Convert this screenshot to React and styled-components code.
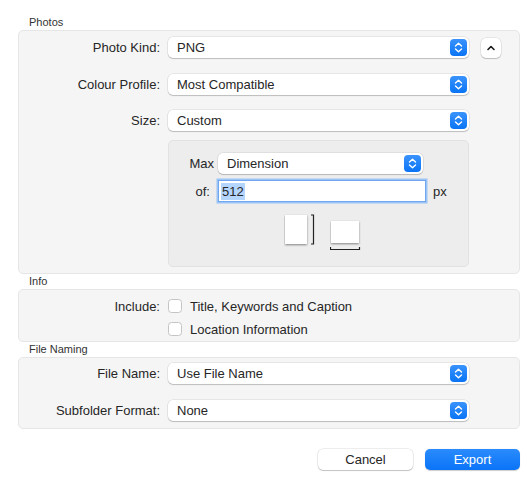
import React from 'react'
import styled, { createGlobalStyle } from 'styled-components'

const GlobalStyle = createGlobalStyle`
  html, body {
    margin: 0;
    padding: 0;
    background: #ffffff;
  }
  body {
    font-family: "Liberation Sans", Arial, sans-serif;
    font-size: 13px;
    color: #262626;
  }
`

const Page = styled.div`
  width: 532px;
  height: 479px;
  box-sizing: border-box;
  padding: 15px 12px 0 18px;
  display: flex;
  flex-direction: column;
`

const SectionTitle = styled.div`
  height: 15px;
  line-height: 14px;
  font-size: 11px;
  color: #333;
  padding-left: 11px;
`

const Panel = styled.div`
  box-sizing: border-box;
  background: #f5f5f5;
  border: 1px solid #e6e6e6;
  border-radius: 5px;
  padding: ${p => p.$pad};
  display: flex;
  flex-direction: column;
  gap: ${p => p.$gap}px;
`

const Row = styled.div`
  display: flex;
  align-items: center;
  height: ${p => p.$h || 21}px;
  margin-top: ${p => p.$mt || 0}px;
`

const Label = styled.div`
  width: 141px;
  text-align: right;
  flex-shrink: 0;
  margin-right: 8px;
  white-space: nowrap;
`

const PopupBox = styled.div`
  box-sizing: border-box;
  width: ${p => p.$w}px;
  height: ${p => p.$h || 21}px;
  background: #fff;
  border-radius: 5px;
  box-shadow: 0 0 0 0.5px rgba(0, 0, 0, 0.12), 0 1px 1px rgba(0, 0, 0, 0.18);
  display: flex;
  align-items: center;
  justify-content: space-between;
  padding: 0 2px 0 9px;
`

const StepperWrap = styled.span`
  display: flex;
  width: 17px;
  height: 17px;
`

function Stepper() {
  return (
    <StepperWrap>
      <svg width="17" height="17" viewBox="0 0 17 17">
        <defs>
          <linearGradient id="stp" x1="0" y1="0" x2="0" y2="1">
            <stop offset="0" stopColor="#3a93fc" />
            <stop offset="1" stopColor="#0a74f5" />
          </linearGradient>
        </defs>
        <rect x="0" y="0" width="17" height="17" rx="4" fill="url(#stp)" />
        <path d="M5.5 7 L8.5 4.3 L11.5 7" fill="none" stroke="#fff" strokeWidth="1.4" strokeLinecap="round" strokeLinejoin="round" />
        <path d="M5.5 10 L8.5 12.7 L11.5 10" fill="none" stroke="#fff" strokeWidth="1.4" strokeLinecap="round" strokeLinejoin="round" />
      </svg>
    </StepperWrap>
  )
}

function Popup({ value, width }) {
  return (
    <PopupBox $w={width}>
      <span>{value}</span>
      <Stepper />
    </PopupBox>
  )
}

const SmallButton = styled.div`
  width: 20px;
  height: 20px;
  margin-left: 12px;
  background: #fff;
  border-radius: 5px;
  box-shadow: 0 0 0 0.5px rgba(0, 0, 0, 0.12), 0 1px 1px rgba(0, 0, 0, 0.18);
  display: flex;
  align-items: center;
  justify-content: center;
`

const SubPanel = styled.div`
  box-sizing: border-box;
  width: 301px;
  height: 127px;
  margin: 9px 0 0 149px;
  background: #ededed;
  border: 1px solid #e2e2e2;
  border-radius: 5px;
  padding: 12px 0 0 0;
  display: flex;
  flex-direction: column;
`

const SubLabel = styled.div`
  width: 45px;
  text-align: right;
  padding-right: ${p => p.$pr || 0}px;
  box-sizing: border-box;
  margin-right: 4px;
  flex-shrink: 0;
`

const SizeInput = styled.div`
  box-sizing: border-box;
  width: 206px;
  height: 20px;
  margin-left: 1px;
  background: #fff;
  box-shadow: 0 0 0 1px #6fa8f0, 0 0 0 2.5px #9cc4f6;
  display: flex;
  align-items: center;
  padding-left: 2px;
`

const Selected = styled.span`
  background: #b4d5fe;
  padding: 1px 1px;
`

const Unit = styled.span`
  margin-left: 8px;
`

const Orientation = styled.div`
  display: flex;
  align-items: flex-start;
  margin: 13px 0 0 115px;
  gap: 14px;
`

function OrientationIcons() {
  return (
    <Orientation>
      <svg width="32" height="40" viewBox="0 0 32 40">
        <defs>
          <filter id="sh" x="-30%" y="-30%" width="160%" height="160%">
            <feDropShadow dx="0" dy="1" stdDeviation="0.8" floodColor="#000" floodOpacity="0.45" />
          </filter>
        </defs>
        <rect x="1" y="1" width="22" height="29" fill="#fff" filter="url(#sh)" />
        <path d="M27 1 H29.5 V30 H27" fill="none" stroke="#222" strokeWidth="1.2" />
      </svg>
      <svg width="32" height="40" viewBox="0 0 32 40">
        <rect x="1" y="7" width="28" height="22" fill="#fff" filter="url(#sh)" />
        <path d="M0.5 33 V35.5 H29.5 V33" fill="none" stroke="#222" strokeWidth="1.2" />
      </svg>
    </Orientation>
  )
}

const CheckRow = styled.div`
  display: flex;
  align-items: center;
  height: 14px;
`

const CheckBox = styled.span`
  box-sizing: border-box;
  width: 14px;
  height: 14px;
  border-radius: 3.5px;
  background: #fff;
  border: 1px solid #c4c4c4;
  margin-right: 8px;
  flex-shrink: 0;
`

const CheckIndent = styled.div`
  width: 149px;
  flex-shrink: 0;
`

const Footer = styled.div`
  display: flex;
  justify-content: flex-end;
  gap: 12px;
  margin-top: 20px;
`

const Button = styled.div`
  box-sizing: border-box;
  width: 95px;
  height: 21px;
  border-radius: 5px;
  display: flex;
  align-items: center;
  justify-content: center;
  background: ${p => (p.$primary ? 'linear-gradient(#2a8bfc, #0a74f7)' : '#fff')};
  color: ${p => (p.$primary ? '#fff' : '#262626')};
  box-shadow: ${p =>
    p.$primary
      ? '0 0.5px 1px rgba(0,0,0,0.2)'
      : '0 0 0 0.5px rgba(0,0,0,0.14), 0 1px 1px rgba(0,0,0,0.18)'};
`

export default function App() {
  return (
    <Page>
      <GlobalStyle />
      <SectionTitle>Photos</SectionTitle>
      <Panel $pad="6px 0 6px 0" $gap={0}>
        <Row>
          <Label>Photo Kind:</Label>
          <Popup value="PNG" width={301} />
          <SmallButton>
            <svg width="10" height="8" viewBox="0 0 10 8">
              <path d="M2 5.5 L5 2.5 L8 5.5" fill="none" stroke="#1a1a1a" strokeWidth="1.6" strokeLinecap="round" strokeLinejoin="round" />
            </svg>
          </SmallButton>
        </Row>
        <Row $mt={16}>
          <Label>Colour Profile:</Label>
          <Popup value="Most Compatible" width={301} />
        </Row>
        <Row $mt={15}>
          <Label>Size:</Label>
          <Popup value="Custom" width={301} />
        </Row>
        <SubPanel>
          <Row $h={20}>
            <SubLabel>Max</SubLabel>
            <Popup value="Dimension" width={205} />
          </Row>
          <Row $h={20} $mt={8}>
            <SubLabel $pr={4}>of:</SubLabel>
            <SizeInput>
              <Selected>512</Selected>
            </SizeInput>
            <Unit>px</Unit>
          </Row>
          <OrientationIcons />
        </SubPanel>
      </Panel>

      <SectionTitle>Info</SectionTitle>
      <Panel $pad="9px 0 5px 0" $gap={9}>
        <CheckRow>
          <Label>Include:</Label>
          <CheckBox />
          <span>Title, Keywords and Caption</span>
        </CheckRow>
        <CheckRow>
          <CheckIndent />
          <CheckBox />
          <span>Location Information</span>
        </CheckRow>
      </Panel>

      <SectionTitle>File Naming</SectionTitle>
      <Panel $pad="5px 0 7px 0" $gap={16}>
        <Row>
          <Label>File Name:</Label>
          <Popup value="Use File Name" width={301} />
        </Row>
        <Row>
          <Label>Subfolder Format:</Label>
          <Popup value="None" width={301} />
        </Row>
      </Panel>

      <Footer>
        <Button>Cancel</Button>
        <Button $primary>Export</Button>
      </Footer>
    </Page>
  )
}
